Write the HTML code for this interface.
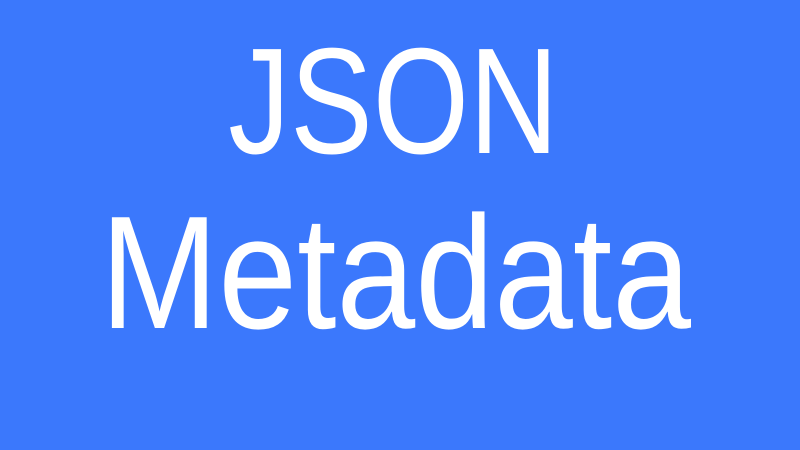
<!DOCTYPE html>
<html><head><style>
html,body{margin:0;padding:0;}
body{width:800px;height:450px;background:#3b78fc;position:relative;overflow:hidden;font-family:"Liberation Sans",sans-serif;color:#fff;}
.t{position:absolute;width:800px;text-align:center;line-height:1;white-space:nowrap;}
.a{top:25px;left:-7px;font-size:151px;}
.a span{display:inline-block;transform:scaleX(0.82);transform-origin:center;}
.b{top:193px;left:-4px;font-size:161px;}
.b span{display:inline-block;transform:scaleX(0.88);transform-origin:center;}
</style></head><body>
<div class="t a"><span>JSON</span></div>
<div class="t b"><span>Metadata</span></div>
</body></html>
